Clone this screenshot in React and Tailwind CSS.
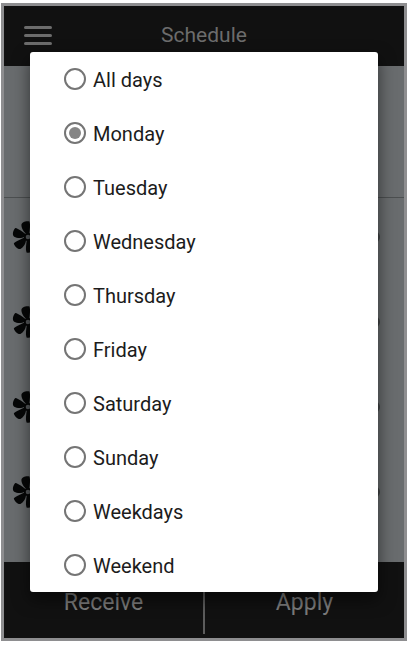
import React, { useState } from "react";

const DAYS = [
  "All days",
  "Monday",
  "Tuesday",
  "Wednesday",
  "Thursday",
  "Friday",
  "Saturday",
  "Sunday",
  "Weekdays",
  "Weekend",
];

const FAN_ROWS = ["slot-1", "slot-2", "slot-3", "slot-4"];
const BLADE_ANGLES = [4, 64, 124, 184, 244, 304];

const FanIcon = () => (
  <svg viewBox="0 0 34 34" className="size-[34px] text-[#060707]" aria-hidden="true">
    {BLADE_ANGLES.map((angle) => (
      <path
        key={angle}
        d="M15.4 14 C12.4 12.6 9.8 8.5 9.6 5.4 C9.6 2.6 14 0.8 17.4 1.4 C18.8 4.5 18.2 10 18 14 Z"
        transform={`rotate(${angle} 17 17)`}
        fill="currentColor"
      />
    ))}
    <circle cx="17" cy="17" r="3.2" fill="#55585a" stroke="currentColor" strokeWidth="1.8" />
  </svg>
);

const Header = () => (
  <header className="relative flex h-[60px] items-center justify-center bg-[#111111]">
    <button
      type="button"
      aria-label="Open menu"
      className="absolute left-5 flex flex-col gap-[5px] pb-0.5"
    >
      <span className="h-[3px] w-7 rounded-full bg-[#6c6c6c]" />
      <span className="h-[3px] w-7 rounded-full bg-[#6c6c6c]" />
      <span className="h-[3px] w-7 rounded-full bg-[#6c6c6c]" />
    </button>
    <h1 className="pb-0.5 text-[21px] leading-7 text-[#6c6c6c]">Schedule</h1>
  </header>
);

const Footer = () => (
  <footer className="flex h-[76px] bg-[#111111] pb-1 text-[23px] leading-7 text-[#7c7c7c]">
    <button type="button" className="flex-1 border-r-2 border-[#5c5c5c] pt-2.5">
      Receive
    </button>
    <button type="button" className="flex-1 pt-2.5">
      Apply
    </button>
  </footer>
);

const DayDialog = ({ selected, onSelect }) => (
  <div className="absolute inset-0 flex items-center px-[26px]">
    <div
      role="dialog"
      aria-label="Day"
      className="w-full rounded-[3px] bg-white shadow-[0_7px_16px_1px_rgba(0,0,0,0.5)]"
    >
      {DAYS.map((day) => (
        <label key={day} className="flex h-[54px] items-center gap-[7px] pl-[34px]">
          <input
            type="radio"
            name="day"
            value={day}
            checked={selected === day}
            onChange={() => onSelect(day)}
            className="grid size-[22px] appearance-none place-content-center rounded-full border-2 border-[#757575] before:size-3 before:rounded-full checked:before:bg-[#858585]"
          />
          <span className="pt-0.5 text-[20px] leading-7 text-[#1c1c1c]">{day}</span>
        </label>
      ))}
    </div>
  </div>
);

export default function App() {
  const [selected, setSelected] = useState("Monday");

  return (
    <div className="bg-white pt-[3px] pr-[3px] pb-[5px] pl-px font-['Roboto',sans-serif]">
      <div className="relative border-[3px] border-[#8e8e90]">
        <Header />
        <main className="bg-[#696c6e]">
          <div className="h-[132px] border-b border-[#4c4f50]" />
          <ul className="pb-6">
            {FAN_ROWS.map((row) => (
              <li
                key={row}
                className="flex h-[85px] items-start justify-between pt-[22px] pr-6 pl-[7px]"
              >
                <FanIcon />
                <span className="my-[11px] size-3 rounded-full bg-[#424546]" />
              </li>
            ))}
          </ul>
        </main>
        <Footer />
        <DayDialog selected={selected} onSelect={setSelected} />
      </div>
    </div>
  );
}
